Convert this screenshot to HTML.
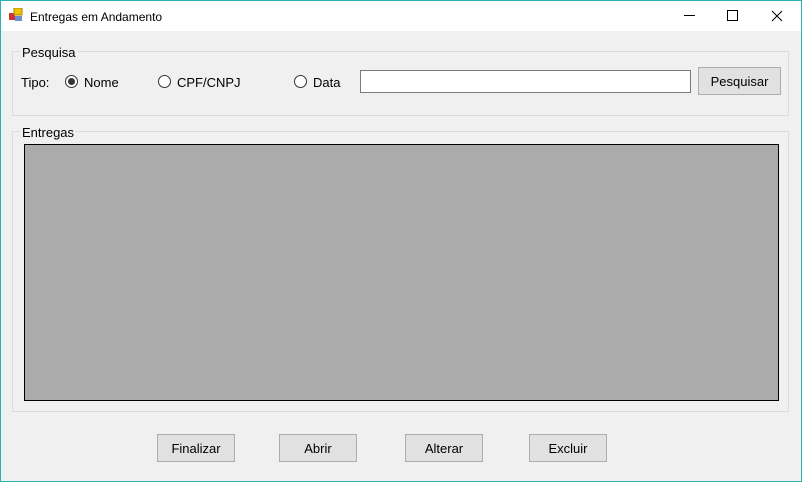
<!DOCTYPE html>
<html><head><style>
*{margin:0;padding:0;box-sizing:border-box}
body{width:802px;height:482px;background:#f0f0f0;font-family:"Liberation Sans",sans-serif;font-size:13px;color:#000;position:relative;overflow:hidden}
.a{position:absolute}
.title{left:0;top:0;width:802px;height:31px;background:#fff}
.gb{border:1px solid #dcdcdc}
.lbl{background:#f0f0f0;padding:0 2px;font-size:13px}
.btn{background:#e1e1e1;border:1px solid #adadad;text-align:center;line-height:28px;font-size:13px}
.rad{width:13px;height:13px;border:1px solid #333;border-radius:50%;background:#fff}
</style></head><body>
<div class="a title"></div>
<div class="a" style="left:0;top:0;width:802px;height:482px;border:1px solid #2bb3b3;z-index:5"></div>
<svg class="a" style="left:9px;top:8px" width="14" height="14"><rect x="0" y="5" width="6" height="7" fill="#c33"/><rect x="5" y="0" width="8" height="7" fill="#f2c200" stroke="#a80" stroke-width="1"/><rect x="6" y="8" width="7" height="5" fill="#6a8fd0"/></svg>
<div class="a" style="left:30px;top:10px;font-size:12px">Entregas em Andamento</div>
<svg class="a" style="left:680px;top:8px" width="110" height="16"><line x1="4" y1="7.5" x2="15" y2="7.5" stroke="#000"/><rect x="47.5" y="2.5" width="10" height="10" fill="none" stroke="#000"/><path d="M92 3L102 13M102 3L92 13" stroke="#000"/></svg>
<div class="a gb" style="left:12px;top:51px;width:777px;height:65px"></div>
<div class="a lbl" style="left:20px;top:45px">Pesquisa</div>
<div class="a" style="left:21px;top:75px">Tipo:</div>
<div class="a rad" style="left:65px;top:75px"><div style="width:7px;height:7px;border-radius:50%;background:#333;margin:2px"></div></div>
<div class="a" style="left:84px;top:75px">Nome</div>
<div class="a rad" style="left:158px;top:75px"></div>
<div class="a" style="left:177px;top:75px">CPF/CNPJ</div>
<div class="a rad" style="left:294px;top:75px"></div>
<div class="a" style="left:313px;top:75px">Data</div>
<div class="a" style="left:360px;top:70px;width:331px;height:23px;background:#fff;border:1px solid #7a7a7a"></div>
<div class="a btn" style="left:698px;top:67px;width:83px;height:28px">Pesquisar</div>
<div class="a gb" style="left:12px;top:131px;width:777px;height:281px"></div>
<div class="a lbl" style="left:20px;top:125px">Entregas</div>
<div class="a" style="left:24px;top:144px;width:755px;height:257px;background:#ababab;border:1px solid #000"></div>
<div class="a btn" style="left:157px;top:434px;width:78px;height:28px">Finalizar</div>
<div class="a btn" style="left:279px;top:434px;width:78px;height:28px">Abrir</div>
<div class="a btn" style="left:405px;top:434px;width:78px;height:28px">Alterar</div>
<div class="a btn" style="left:529px;top:434px;width:78px;height:28px">Excluir</div>
</body></html>
